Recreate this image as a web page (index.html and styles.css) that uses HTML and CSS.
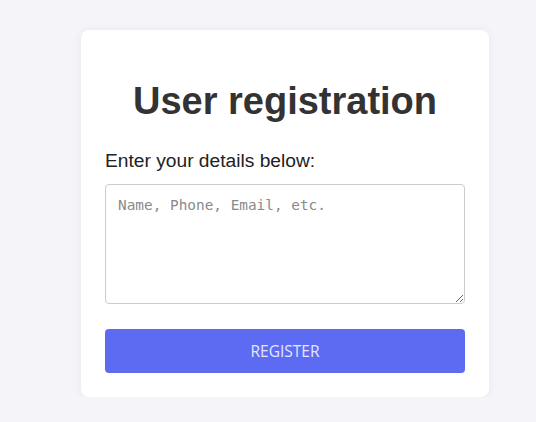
FILE: index.html
```html
<!DOCTYPE html>
<html lang="en">
<head>
<meta charset="utf-8">
<title>User registration</title>
<link rel="stylesheet" href="styles.css">
</head>
<body>
<main class="page">
  <form class="card">
    <h1 class="title">User registration</h1>
    <label class="label" for="details">Enter your details below:</label>
    <textarea id="details" class="details" placeholder="Name, Phone, Email, etc."></textarea>
    <button type="button" class="btn">REGISTER</button>
  </form>
</main>
</body>
</html>
```

FILE: styles.css
```css
html, body {
  margin: 0;
  padding: 0;
  background: #f4f4f9;
}
.page {
  display: flex;
  justify-content: center;
  padding-top: 30px;
}
.card {
  width: 360px;
  margin-left: 34px;
  background: #ffffff;
  border-radius: 8px;
  box-shadow: 0 0 10px rgba(0, 0, 0, 0.06);
  padding: 24px;
  display: flex;
  flex-direction: column;
}
.title {
  margin: 26px 0 27px;
  font-family: "Liberation Sans", Arial, sans-serif;
  font-size: 38px;
  font-weight: 700;
  color: #333333;
  text-align: center;
  line-height: normal;
}
.label {
  font-family: "Liberation Sans", Arial, sans-serif;
  font-size: 19.2px;
  color: #222222;
  margin-bottom: 12px;
}
.details {
  box-sizing: border-box;
  width: 360px;
  height: 120px;
  padding: 12px;
  border: 1px solid #cccccc;
  border-radius: 4px;
  font-family: "DejaVu Sans Mono", monospace;
  font-size: 14.4px;
  color: #333;
  margin: 0 0 25px;
}
.details::placeholder {
  color: #8a8a8a;
}
.btn {
  height: 44px;
  border: none;
  border-radius: 4px;
  background: #5d6bf3;
  color: #e4e7ff;
  font-family: "Open Sans", sans-serif;
  font-size: 15.5px;
  cursor: pointer;
}
```
